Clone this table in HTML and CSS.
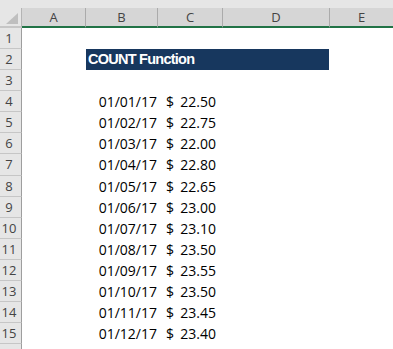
FILE: index.html
```html
<!DOCTYPE html>
<html lang="en">
<head>
<meta charset="utf-8">
<title>COUNT Function</title>
<link rel="stylesheet" href="styles.css">
</head>
<body>
<div class="sheet">
  <div class="topbar"></div>
  <div class="row colhdr">
    <div class="corner">
      <svg class="corner-tri" width="13" height="12" viewBox="0 0 13 12"><polygon points="12,0 12,11 0,11" fill="#bfbfbf"/></svg>
    </div>
    <div class="ch">A</div>
    <div class="ch">B</div>
    <div class="ch">C</div>
    <div class="ch">D</div>
    <div class="ch last">E</div>
  </div>
  <div class="body">
    <div class="row"><div class="rh">1</div><div class="c"></div><div class="c"></div><div class="c"></div><div class="c"></div><div class="c"></div></div>
    <div class="row"><div class="rh">2</div><div class="c"></div><div class="title">COUNT Function</div><div class="c"></div></div>
    <div class="row"><div class="rh">3</div><div class="c"></div><div class="c"></div><div class="c"></div><div class="c"></div><div class="c"></div></div>
    <div class="row"><div class="rh">4</div><div class="c"></div><div class="c date">01/01/17</div><div class="c money"><span>$</span><span>22.50</span></div><div class="c"></div><div class="c"></div></div>
    <div class="row"><div class="rh">5</div><div class="c"></div><div class="c date">01/02/17</div><div class="c money"><span>$</span><span>22.75</span></div><div class="c"></div><div class="c"></div></div>
    <div class="row"><div class="rh">6</div><div class="c"></div><div class="c date">01/03/17</div><div class="c money"><span>$</span><span>22.00</span></div><div class="c"></div><div class="c"></div></div>
    <div class="row"><div class="rh">7</div><div class="c"></div><div class="c date">01/04/17</div><div class="c money"><span>$</span><span>22.80</span></div><div class="c"></div><div class="c"></div></div>
    <div class="row"><div class="rh">8</div><div class="c"></div><div class="c date">01/05/17</div><div class="c money"><span>$</span><span>22.65</span></div><div class="c"></div><div class="c"></div></div>
    <div class="row"><div class="rh">9</div><div class="c"></div><div class="c date">01/06/17</div><div class="c money"><span>$</span><span>23.00</span></div><div class="c"></div><div class="c"></div></div>
    <div class="row"><div class="rh">10</div><div class="c"></div><div class="c date">01/07/17</div><div class="c money"><span>$</span><span>23.10</span></div><div class="c"></div><div class="c"></div></div>
    <div class="row"><div class="rh">11</div><div class="c"></div><div class="c date">01/08/17</div><div class="c money"><span>$</span><span>23.50</span></div><div class="c"></div><div class="c"></div></div>
    <div class="row"><div class="rh">12</div><div class="c"></div><div class="c date">01/09/17</div><div class="c money"><span>$</span><span>23.55</span></div><div class="c"></div><div class="c"></div></div>
    <div class="row"><div class="rh">13</div><div class="c"></div><div class="c date">01/10/17</div><div class="c money"><span>$</span><span>23.50</span></div><div class="c"></div><div class="c"></div></div>
    <div class="row"><div class="rh">14</div><div class="c"></div><div class="c date">01/11/17</div><div class="c money"><span>$</span><span>23.45</span></div><div class="c"></div><div class="c"></div></div>
    <div class="row"><div class="rh">15</div><div class="c"></div><div class="c date">01/12/17</div><div class="c money"><span>$</span><span>23.40</span></div><div class="c"></div><div class="c"></div></div>
    <div class="row"><div class="rh"></div><div class="c"></div><div class="c"></div><div class="c"></div><div class="c"></div><div class="c"></div></div>
  </div>
</div>
</body>
</html>
```
FILE: styles.css
```css
html, body {
  margin: 0;
  padding: 0;
  background: #ffffff;
}
.sheet {
  width: 393px;
  height: 349px;
  overflow: hidden;
  font-family: "Open Sans", "Liberation Sans", sans-serif;
  color: #000;
}
.topbar {
  height: 8px;
  background: #e6e6e6;
}
.row {
  display: grid;
  grid-template-columns: 22px 64px 72px 65px 107px 63px;
  height: 21.08px;
}
.colhdr {
  height: 20px;
}
.corner {
  box-sizing: border-box;
  background: #e6e6e6;
  border-right: 1px solid #b4b4b4;
  border-bottom: 2px solid #c6c6c6;
  position: relative;
}
.corner-tri {
  position: absolute;
  left: 6px;
  top: 5px;
}
.ch {
  box-sizing: border-box;
  background: #d6d6d6;
  border-right: 1px solid #ababab;
  border-bottom: 2px solid #217346;
  font-size: 13px;
  line-height: 18px;
  text-align: center;
  color: #444;
}
.ch.last {
  border-right: none;
}
.rh {
  box-sizing: border-box;
  background: #e6e6e6;
  border-right: 1px solid #9e9e9e;
  border-bottom: 1px solid #c6c6c6;
  font-size: 13px;
  line-height: 20px;
  text-align: center;
  padding-right: 3px;
  color: #444;
}
.c {
  font-size: 14px;
  line-height: 21.08px;
  white-space: nowrap;
}
.date {
  text-align: right;
  padding-right: 1px;
}
.money {
  display: flex;
  justify-content: space-between;
  padding: 0 7px 0 8px;
}
.title {
  grid-column: span 3;
  background: #17375e;
  color: #ffffff;
  font-family: "Liberation Sans", Arial, sans-serif;
  font-weight: bold;
  font-size: 14.5px;
  letter-spacing: -0.75px;
  line-height: 21.08px;
  padding-left: 2px;
  margin-right: 1px;
  white-space: nowrap;
}
```
